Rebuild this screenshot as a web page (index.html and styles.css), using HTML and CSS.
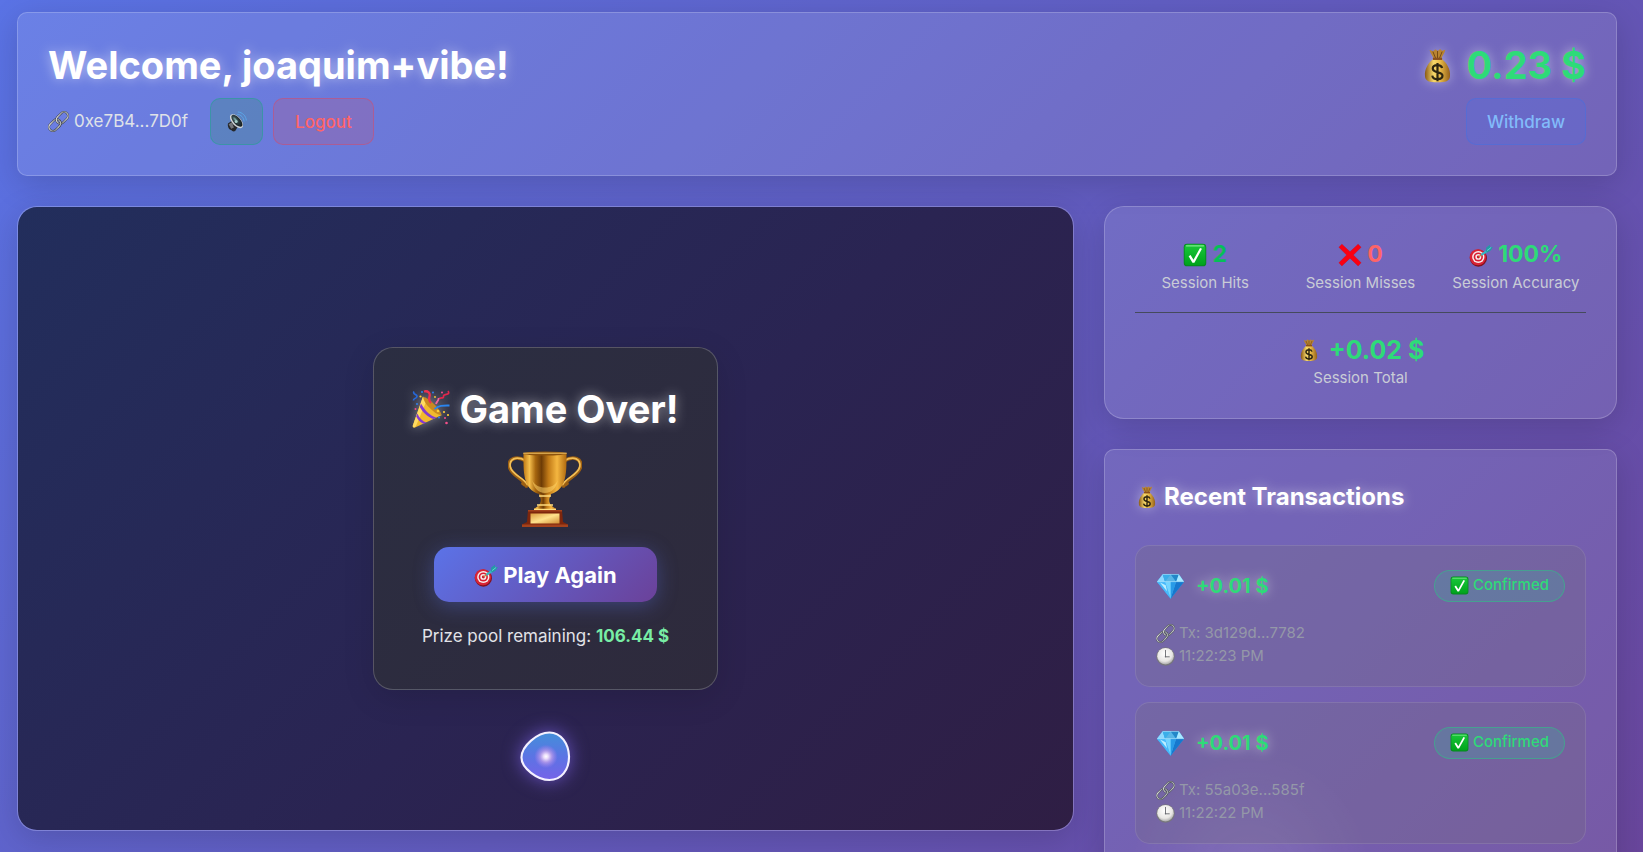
FILE: index.html
```html
<!DOCTYPE html>
<html lang="en">
<head>
<meta charset="utf-8">
<meta name="viewport" content="width=device-width, initial-scale=1">
<title>Game</title>
<link rel="stylesheet" href="styles.css">
</head>
<body>
<svg class="sprite" aria-hidden="true">
  <defs>
    <linearGradient id="gold" x1="0" y1="0" x2="1" y2="0"><stop offset="0" stop-color="#8a5a16"/><stop offset=".35" stop-color="#f7d86a"/><stop offset=".6" stop-color="#e9bb48"/><stop offset="1" stop-color="#94601a"/></linearGradient>
    <linearGradient id="cup" x1="0" y1="0" x2="1" y2="0"><stop offset="0" stop-color="#c07a16"/><stop offset=".14" stop-color="#f5be4b"/><stop offset=".28" stop-color="#a6660f"/><stop offset=".42" stop-color="#6e3c06"/><stop offset=".58" stop-color="#c17a17"/><stop offset=".78" stop-color="#f4b640"/><stop offset="1" stop-color="#b06a10"/></linearGradient>
    <linearGradient id="plaque" x1="0" y1="0" x2="1" y2="1"><stop offset="0" stop-color="#d99a3e"/><stop offset=".5" stop-color="#ffe28c"/><stop offset="1" stop-color="#d18e35"/></linearGradient>
    <linearGradient id="steel" x1="0" y1="0" x2="1" y2="1"><stop offset="0" stop-color="#f2f3f5"/><stop offset=".5" stop-color="#85898f"/><stop offset="1" stop-color="#d5d8dc"/></linearGradient>
    <linearGradient id="check-green" x1="0" y1="0" x2="0" y2="1"><stop offset="0" stop-color="#19c83a"/><stop offset="1" stop-color="#00a31c"/></linearGradient>
    <radialGradient id="clock-face" cx=".45" cy=".35" r=".65"><stop offset="0" stop-color="#fff"/><stop offset=".7" stop-color="#e8e6e4"/><stop offset="1" stop-color="#aaa"/></radialGradient>
    <radialGradient id="cone" cx=".45" cy=".35" r=".7"><stop offset="0" stop-color="#87b8b4"/><stop offset=".35" stop-color="#32474b"/><stop offset="1" stop-color="#101416"/></radialGradient>
    <linearGradient id="orb" x1="0" y1="0" x2="0" y2="1"><stop offset="0" stop-color="#438fd9"/><stop offset=".5" stop-color="#5b74e4"/><stop offset="1" stop-color="#7663e8"/></linearGradient>
    <radialGradient id="orb-core"><stop offset="0" stop-color="#fff"/><stop offset=".2" stop-color="#eadcfa"/><stop offset=".5" stop-color="#b79bea" stop-opacity=".85"/><stop offset=".8" stop-color="#9482ea" stop-opacity=".5"/><stop offset="1" stop-color="#8a78e8" stop-opacity="0"/></radialGradient>
  </defs>
  <symbol id="i-bag" viewBox="0 0 32 32">
    <path d="M9.200 2.600c1.200 0 1.800 1 2.800 1 .9 0 1.400-1.500 2.300-1.500.9 0 1 1.100 1.900 1.100s1.200-1.300 2.100-1.300c.8 0 1.100 1.400 1.800 1.400s1.500-.9 2.700-.9c-.4 3-3 5.400-3.400 7.900h-6.800C12.200 7.700 9.400 5.400 9.200 2.600z" fill="#b98432"/>
    <path d="M12 4l2.500 6M16 3.500V10M20 4l-2.400 6" stroke="#714611" stroke-width=".8" fill="none"/>
    <path d="M12.800 10h6.400c4.800 3.500 8.300 9.500 7.600 15.500C26.500 29.500 23 30.500 16 30.500S5.500 29.500 5.200 25.500C4.500 19.500 8 13.500 12.800 10z" fill="url(#gold)"/>
    <path d="M12 9.300h8v1.900h-8z" fill="#8a4f1c"/>
    <path d="M20 18.200c-.5-1.800-2-2.500-4-2.500-2.300 0-4.100 1-4.100 3 0 4.600 8.400 2 8.400 6.200 0 2-2 2.900-4.200 2.900-2.500 0-4.300-1-4.600-3.100M16 13.800v15.800" stroke="#2e2611" stroke-width="1.900" fill="none"/>
  </symbol>
  <symbol id="i-link" viewBox="0 0 32 32">
    <g fill="none" transform="rotate(-45 16 16)">
      <rect x="-2" y="10" width="20" height="12" rx="6" stroke="#3d4045" stroke-width="3.200"/>
      <rect x="-2" y="10" width="20" height="12" rx="6" stroke="url(#steel)" stroke-width="1.900"/>
      <rect x="14" y="10" width="20" height="12" rx="6" stroke="#3d4045" stroke-width="3.200"/>
      <rect x="14" y="10" width="20" height="12" rx="6" stroke="url(#steel)" stroke-width="1.900"/>
      <path d="M10 22h2a6 6 0 0 0 6-6" stroke="#3d4045" stroke-width="3.200"/>
      <path d="M9 22h3a6 6 0 0 0 6-6" stroke="#b9bdc2" stroke-width="1.900"/>
    </g>
  </symbol>
  <symbol id="i-speaker" viewBox="0 0 32 32">
    <path d="M3 19l6-4 9 9-4 6.500c-2 1.500-5 .5-6-1.500C4 28 2 23 3 19z" fill="#26282b"/>
    <path d="M4 20l5-3 3 8-4 2z" fill="#74777c"/>
    <ellipse cx="16" cy="15.500" rx="6.800" ry="13" transform="rotate(-42 16 15.500)" fill="#cfd3d6"/>
    <ellipse cx="16.600" cy="15" rx="5.200" ry="11.300" transform="rotate(-42 16.600 15)" fill="url(#cone)"/>
    <circle cx="15.500" cy="16" r="2.300" fill="#a6d0c9"/>
    <path d="M17 5c6 .5 10 5 10.500 11M18 1.500c7 .5 12.500 6 13 13" fill="none" stroke="#5aa7e8" stroke-width="1.500"/>
  </symbol>
  <symbol id="i-check" viewBox="0 0 32 32">
    <rect x="1" y="1" width="30" height="30" rx="4.500" fill="#078820"/>
    <rect x="2.200" y="2" width="27.600" height="27.500" rx="3.800" fill="url(#check-green)"/>
    <path d="M4.500 3.800h23" stroke="#7be78b" stroke-width="1.400" stroke-linecap="round"/>
    <path d="M7.500 17.500l2.600-1.600 3.900 6.500L22.700 6.600l2.600 1.200L15.200 26.300h-2.600z" fill="#fff"/>
  </symbol>
  <symbol id="i-cross" viewBox="0 0 32 32">
    <path d="M5.200 1.500L16 11.800 26.800 1.500l4 4.200L20.400 16l10.400 10.300-4 4.200L16 20.200 5.200 30.500l-4-4.200L11.600 16 1.200 5.700z" fill="#fb0012" stroke="#d80010" stroke-width=".5"/>
  </symbol>
  <symbol id="i-target" viewBox="0 0 32 32">
    <ellipse cx="12.500" cy="20" rx="11.500" ry="11.500" fill="#83101d"/>
    <ellipse cx="11.900" cy="19" rx="10.900" ry="10.700" fill="#d92436"/>
    <ellipse cx="12.400" cy="18.600" rx="8.200" ry="8" fill="#f8eeee"/>
    <ellipse cx="12.400" cy="18.600" rx="6.200" ry="6" fill="#d91e33"/>
    <ellipse cx="12.400" cy="18.600" rx="4" ry="3.800" fill="#f8eeee"/>
    <ellipse cx="12.400" cy="18.600" rx="2" ry="1.900" fill="#c91b2e"/>
    <path d="M13 18.300L22 12" stroke="#c48c42" stroke-width="1.800"/>
    <path d="M16.500 15.900l8.500-5.900" stroke="#35b6c3" stroke-width="3"/>
    <path d="M22.500 10.600l.5-4.600L28 2.400l.2 3.200 3.600-.3-2.600 4.400-4.500 3z" fill="#249aa5"/>
    <path d="M24 10.200l5.500-4.300" stroke="#74e0e2" stroke-width="1"/>
  </symbol>
  <symbol id="i-gem" viewBox="0 0 32 32">
    <path d="M7 2.500h18.500L31.500 11 16.200 30.500.5 11z" fill="#2da4ec"/>
    <path d="M7 2.500L.5 11h9.200z" fill="#8fd9ff"/><path d="M7 2.500h9.200L9.700 11z" fill="#3aaee9"/>
    <path d="M16.200 2.500L22.500 11H9.700z" fill="#58b5e6"/><path d="M16.200 2.500h9.300l-3 8.500z" fill="#2387c8"/>
    <path d="M25.500 2.500l6 8.500h-9z" fill="#a9e8ff"/><path d="M.5 11h9.200l6.500 19.500z" fill="#48b9fb"/>
    <path d="M9.700 11h12.800l-6.300 19.500z" fill="#73d4ff"/><path d="M16.200 11h6.300l-6.300 19.500z" fill="#289be7"/>
    <path d="M22.500 11h9L16.200 30.500z" fill="#1678ce"/><path d="M4 12l8 10-1.500-7z" fill="#bceeff"/>
    <path d="M.8 11h30.400M7 2.800h18.500" stroke="#cdf2ff" stroke-width=".6"/>
  </symbol>
  <symbol id="i-clock" viewBox="0 0 32 32">
    <circle cx="16" cy="16" r="15.500" fill="#77777b"/><circle cx="16" cy="15.500" r="14" fill="url(#clock-face)"/>
    <path d="M16 5v11.500h7" fill="none" stroke="#66676c" stroke-width="1.500"/>
    <circle cx="16" cy="16.500" r="1.200" fill="#66676c"/>
  </symbol>
  <symbol id="i-party" viewBox="0 0 38 38">
    <path d="M11 6.500C15 15 22 22 30 25L3 37.500c-2 .5-2.800-.8-2-2.500z" fill="#f1b92e"/>
    <path d="M11 6.500l3 5.500L4 36l-1.500 1.500C1 37.600.4 36.500 1 35z" fill="#ffdc62"/>
    <path d="M9 13.500c4.500 8 9 12 15.500 14.200l-3 1.400C15.500 27 11 22.500 7.800 17zM5.300 23.500c2.500 5 5.500 8 9.200 9l-3 1.300c-3.300-1.500-5.400-3.800-7.300-7.300z" fill="#843bd0"/>
    <path d="M11.500 7C16 7 28 19 29.500 24.500 25 27 10 12 11.500 7z" fill="#c98a20"/>
    <path d="M12 1.500c4-1 6.500 1.500 5.500 5s0 5 1.500 6.500" fill="none" stroke="#ee304f" stroke-width="2.300"/>
    <path d="M22.500 19c5-4 9-3.500 15-3.500" fill="none" stroke="#2a85ef" stroke-width="2"/>
    <path d="M2 1.500c-2 3 5 3 2.500 6-2 2-3 .5-3 3" fill="none" stroke="#2768d8" stroke-width="1.700"/>
    <path d="M36 1c3 5-5 2-4.500 5.500.3 2.500-3.500.5-4 2.500" fill="none" stroke="#e3274c" stroke-width="1.700"/>
    <path d="M24 14c.5-3 3-2.800 2.500-6" fill="none" stroke="#f2679d" stroke-width="1.800"/>
    <g fill="#ffcf36"><circle cx="8.500" cy="6.500" r="1.100"/><circle cx="26" cy="21" r="1.300"/><circle cx="32" cy="22" r="1.100"/><circle cx="36" cy="25" r="1.100"/><circle cx="23" cy="7" r=".9"/></g>
    <g fill="#3080ed"><circle cx="10" cy="2" r="1"/><circle cx="21" cy="2.500" r="1"/><circle cx="27" cy="27.500" r="1"/><circle cx="5" cy="14" r="1"/></g>
    <g fill="#f4508a"><circle cx="34.500" cy="33" r="1.300"/><circle cx="3.500" cy="19" r="1"/><circle cx="33" cy="28" r="1"/><circle cx="30" cy="2.500" r="1"/></g>
  </symbol>
  <symbol id="i-trophy" viewBox="0 0 74 76">
    <path d="M18 10C8 4 0 8 1.500 16c2 9 14 11 17 19M15 32.500c2 2 4 2.500 5.500.5M56 10c10-6 18-2 16.500 6-2 9-14 11-17 19M59 32.500c-2 2-4 2.500-5.500.5" fill="none" stroke="#9c5f12" stroke-width="3.600" stroke-linecap="round"/>
    <path d="M17.500 9.500C8 4.500 1 8 2.200 15.800c2 8.500 13.500 10.500 17 17.700M56.500 9.500C66 4.500 73 8 71.800 15.800c-2 8.500-13.500 10.500-17 17.700" fill="none" stroke="#f2bf58" stroke-width="1.700" stroke-linecap="round"/>
    <path d="M15.500 2h43c0 18 1 36-15.500 41H31C14.500 38 15.500 20 15.500 2z" fill="url(#cup)"/>
    <path d="M24 29c4 10 22 10 26 0-2 8-6 13-13 13s-11-5-13-13z" fill="#ffd468" opacity=".55"/>
    <ellipse cx="37" cy="2.500" rx="21.800" ry="2" fill="#8d530d"/><path d="M15.300 2.200h43.400" stroke="#f5c968" stroke-width="1"/>
    <path d="M31 43h12l-1.500 4c-1 4 .5 8 6.500 10.500V60H26v-2.500c6-2.500 7.500-6.500 6.500-10.500z" fill="url(#cup)"/>
    <path d="M31 45h12M29 54h16M26 58.500h22" stroke="#ffdc7d" stroke-width="1.300"/>
    <path d="M20 59h34l1 12 5 2.500v2.500H14v-2.500l5-2.500z" fill="#7d260c"/>
    <path d="M20 59h34v1.500H20zM14 73.500h46V76H14z" fill="#a4421c"/>
    <rect x="22.500" y="62.500" width="29" height="10" fill="url(#plaque)"/>
  </symbol>
</svg>

<div class="page">
  <header class="card topbar">
    <div class="account">
      <h1 class="title">Welcome, joaquim+vibe!</h1>
      <div class="account-row">
        <span class="wallet"><svg class="icon icon-m"><use href="#i-link"/></svg>0xe7B4...7D0f</span>
        <div class="account-actions">
          <button class="btn btn-sound" type="button" aria-label="Toggle sound"><svg class="icon icon-m"><use href="#i-speaker"/></svg></button>
          <button class="btn btn-logout" type="button">Logout</button>
        </div>
      </div>
    </div>
    <div class="balance">
      <div class="balance-value"><svg class="icon icon-bag-xl"><use href="#i-bag"/></svg>0.23 $</div>
      <button class="btn btn-withdraw" type="button">Withdraw</button>
    </div>
  </header>

  <main class="layout">
    <section class="game" aria-label="Game area">
      <div class="dialog">
        <h2 class="title dialog-title"><svg class="icon icon-xl"><use href="#i-party"/></svg>Game Over!</h2>
        <svg class="trophy"><use href="#i-trophy"/></svg>
        <button class="play" type="button"><svg class="icon icon-l"><use href="#i-target"/></svg>Play Again</button>
        <p class="pool">Prize pool remaining: <strong>106.44 $</strong></p>
      </div>
      <svg class="orb" viewBox="0 0 52 52" aria-hidden="true">
        <path d="M30 1.500C42 1.500 49.500 13 50 26 50 40 42 50 30 50 18 50 1.500 38 1.500 27 1.500 15 18 1.500 30 1.500z" fill="url(#orb)" stroke="#f4f1ff" stroke-width="2.200"/>
        <circle cx="26.500" cy="26" r="12" fill="url(#orb-core)"/>
      </svg>
    </section>

    <aside class="sidebar">
      <section class="card stats" aria-label="Session statistics">
        <div class="stats-grid">
          <div class="stat"><div class="stat-value hit"><svg class="icon icon-l"><use href="#i-check"/></svg>2</div><div class="stat-label">Session Hits</div></div>
          <div class="stat"><div class="stat-value miss"><svg class="icon icon-l"><use href="#i-cross"/></svg>0</div><div class="stat-label">Session Misses</div></div>
          <div class="stat"><div class="stat-value"><svg class="icon icon-l"><use href="#i-target"/></svg>100%</div><div class="stat-label">Session Accuracy</div></div>
        </div>
        <div class="stat total"><div class="stat-value total-value"><svg class="icon icon-l"><use href="#i-bag"/></svg>+0.02 $</div><div class="stat-label">Session Total</div></div>
      </section>

      <section class="card history">
        <h2 class="history-title"><svg class="icon icon-l"><use href="#i-bag"/></svg>Recent Transactions</h2>
        <ul class="tx-list">
          <li class="tx">
            <div class="tx-head">
              <div class="amount"><svg class="gem"><use href="#i-gem"/></svg>+0.01 $</div>
              <span class="badge"><svg class="icon icon-s"><use href="#i-check"/></svg>Confirmed</span>
            </div>
            <div class="tx-line"><svg class="icon icon-s"><use href="#i-link"/></svg>Tx: 3d129d...7782</div>
            <div class="tx-line"><svg class="icon icon-s"><use href="#i-clock"/></svg>11:22:23 PM</div>
          </li>
          <li class="tx">
            <div class="tx-head">
              <div class="amount"><svg class="gem"><use href="#i-gem"/></svg>+0.01 $</div>
              <span class="badge"><svg class="icon icon-s"><use href="#i-check"/></svg>Confirmed</span>
            </div>
            <div class="tx-line"><svg class="icon icon-s"><use href="#i-link"/></svg>Tx: 55a03e...585f</div>
            <div class="tx-line"><svg class="icon icon-s"><use href="#i-clock"/></svg>11:22:22 PM</div>
          </li>
        </ul>
      </section>
    </aside>
  </main>
</div>
</body>
</html>
```

FILE: styles.css
```css
* { box-sizing: border-box; }

body {
  margin: 0;
  height: 100vh;
  overflow: hidden;
  font-family: Inter, "Liberation Sans", sans-serif;
  font-size: 17px;
  line-height: 1.5;
  color: #fff;
  background: linear-gradient(135deg, #5a73e5 0%, #69469c 100%);
}

h1, h2, p, ul { margin: 0; padding: 0; }
ul { list-style: none; }

.sprite { position: absolute; width: 0; height: 0; }
.icon { flex: none; overflow: visible; }
.icon-s { width: 19px; height: 19px; }
.icon-m { width: 21px; height: 21px; }
.icon-l { width: 24px; height: 24px; }
.icon-xl { width: 38px; height: 38px; }
.icon-bag-xl { width: 37px; height: 37px; }

.page {
  display: flex;
  flex-direction: column;
  gap: 30px;
  padding: 12px 26px 21px 17px;
}

.card {
  padding: 30px;
  border: 1px solid rgba(255, 255, 255, 0.2);
  border-radius: 10px;
  background: rgba(240, 250, 250, 0.11);
  box-shadow: 0 8px 32px rgba(0, 0, 0, 0.15);
}

.title {
  font-size: 38px;
  font-weight: 700;
  line-height: 44px;
  white-space: nowrap;
  text-shadow: 0 0 12px rgba(255, 255, 255, 0.5);
}

.topbar { display: flex; justify-content: space-between; }
.account, .balance { display: flex; flex-direction: column; gap: 11px; }
.account-row { display: flex; align-items: center; gap: 22px; }
.account-actions { display: flex; gap: 10px; }
.wallet { display: flex; align-items: center; gap: 5px; color: #dfe2e8; }
.balance { align-items: flex-end; }
.balance-value {
  display: flex;
  align-items: center;
  gap: 10px;
  font-size: 38px;
  font-weight: 700;
  line-height: 44px;
  color: #2edb78;
  text-shadow: 0 0 12px rgba(255, 255, 255, 0.5);
}
.balance-value .icon, .dialog-title .icon, .history-title .icon {
  filter: drop-shadow(0 0 6px rgba(255, 255, 255, 0.4));
}

.btn {
  display: flex;
  align-items: center;
  height: 47px;
  padding: 0 20px;
  border: 1px solid;
  border-radius: 10px;
  font: 500 17px/24px Inter, "Liberation Sans", sans-serif;
}
.btn-sound { padding: 0 15px; border-color: rgba(40, 160, 150, 0.6); background: rgba(70, 140, 150, 0.4); }
.btn-logout { padding: 0 21px; color: #ff6468; border-color: rgba(200, 80, 120, 0.6); background: rgba(160, 100, 160, 0.4); }
.btn-withdraw { color: #82bbfa; border-color: rgba(75, 110, 220, 0.6); background: rgba(85, 110, 220, 0.35); }

.layout {
  display: grid;
  grid-template-columns: minmax(0, 1057fr) minmax(0, 513fr);
  gap: 30px;
  align-items: start;
}

.game {
  position: relative;
  display: flex;
  align-items: center;
  justify-content: center;
  height: calc(100vh - 227px);
  min-height: 580px;
  border: 1px solid rgba(255, 255, 255, 0.2);
  border-radius: 20px;
  background: linear-gradient(135deg, #222e5c 0%, #2a2452 55%, #2f1e44 100%);
  background-clip: padding-box;
  box-shadow: 0 8px 32px rgba(0, 0, 0, 0.15);
}

.dialog {
  display: flex;
  flex-direction: column;
  align-items: center;
  padding: 39px 38px;
  border: 1px solid rgba(255, 255, 255, 0.2);
  border-radius: 20px;
  background: linear-gradient(135deg, #2b2e42, #2e2a3c);
  box-shadow: 0 8px 32px rgba(0, 0, 0, 0.12);
}
.dialog-title { display: flex; align-items: center; gap: 9px; }
.trophy { width: 74px; height: 76px; margin: 20px 0; overflow: visible; }
.play {
  display: flex;
  align-items: center;
  gap: 5px;
  height: 55px;
  padding: 0 40px;
  border: 0;
  border-radius: 15px;
  color: #fff;
  font: 700 22px/28px Inter, "Liberation Sans", sans-serif;
  background: linear-gradient(135deg, #5b73e8, #6b4199);
  box-shadow: 0 4px 20px rgba(91, 115, 232, 0.35);
}
.pool { margin-top: 20px; color: #e2e3e8; line-height: 28px; }
.pool strong { font-weight: 700; color: #78eda5; }

.orb {
  position: absolute;
  left: 50%;
  bottom: 48px;
  width: 51px;
  height: 51px;
  margin-left: -26px;
  overflow: visible;
  filter: drop-shadow(0 0 9px rgba(120, 95, 225, 0.75));
}

.sidebar { display: grid; gap: 30px; }

.stats { border-radius: 20px; }
.stats-grid {
  display: grid;
  grid-template-columns: repeat(3, minmax(0, 1fr));
  gap: 15px;
  padding-bottom: 19px;
  border-bottom: 1px solid #454a5c;
}
.stat { text-align: center; }
.stat-value {
  display: flex;
  align-items: center;
  justify-content: center;
  gap: 5px;
  font-size: 23px;
  font-weight: 700;
  line-height: 35px;
  color: #2edb78;
}
.stat-value.hit { color: #06bf58; }
.stat-value.miss { color: #ff6468; }
.stat-label { font-size: 15px; line-height: 21px; color: #c9ccd6; white-space: nowrap; }
.total { padding-top: 20px; }
.stat-value.total-value { gap: 8px; font-size: 25px; line-height: 34px; }

.history {
  background:
    radial-gradient(circle at 145px 100%, rgba(255, 255, 255, 0.09), transparent 120px),
    rgba(240, 250, 250, 0.11);
}
.history-title {
  display: flex;
  align-items: center;
  gap: 5px;
  margin-bottom: 31px;
  font-size: 24px;
  font-weight: 700;
  line-height: 34px;
  text-shadow: 0 0 12px rgba(255, 255, 255, 0.5);
}
.tx-list { display: grid; gap: 15px; }
.tx {
  padding: 20px 20px 18px;
  border: 1px solid rgba(255, 255, 255, 0.1);
  border-radius: 15px;
  background: rgba(120, 112, 125, 0.28);
}
.tx-head { display: flex; align-items: center; justify-content: space-between; height: 39px; margin-bottom: 17px; }
.amount {
  display: flex;
  align-items: center;
  gap: 11px;
  font-size: 20px;
  font-weight: 700;
  color: #2edb78;
  text-shadow: 0 0 12px rgba(255, 255, 255, 0.5);
}
.gem { width: 29px; height: 28px; }
.badge {
  display: flex;
  align-items: center;
  gap: 4px;
  height: 32px;
  padding: 0 15px;
  border: 1px solid rgba(40, 200, 130, 0.5);
  border-radius: 16px;
  background: rgba(80, 150, 160, 0.4);
  color: #2edb78;
  font-size: 15px;
  font-weight: 500;
}
.tx-line { display: flex; align-items: center; gap: 4px; height: 23px; font-size: 15px; color: #9498a8; }
```
